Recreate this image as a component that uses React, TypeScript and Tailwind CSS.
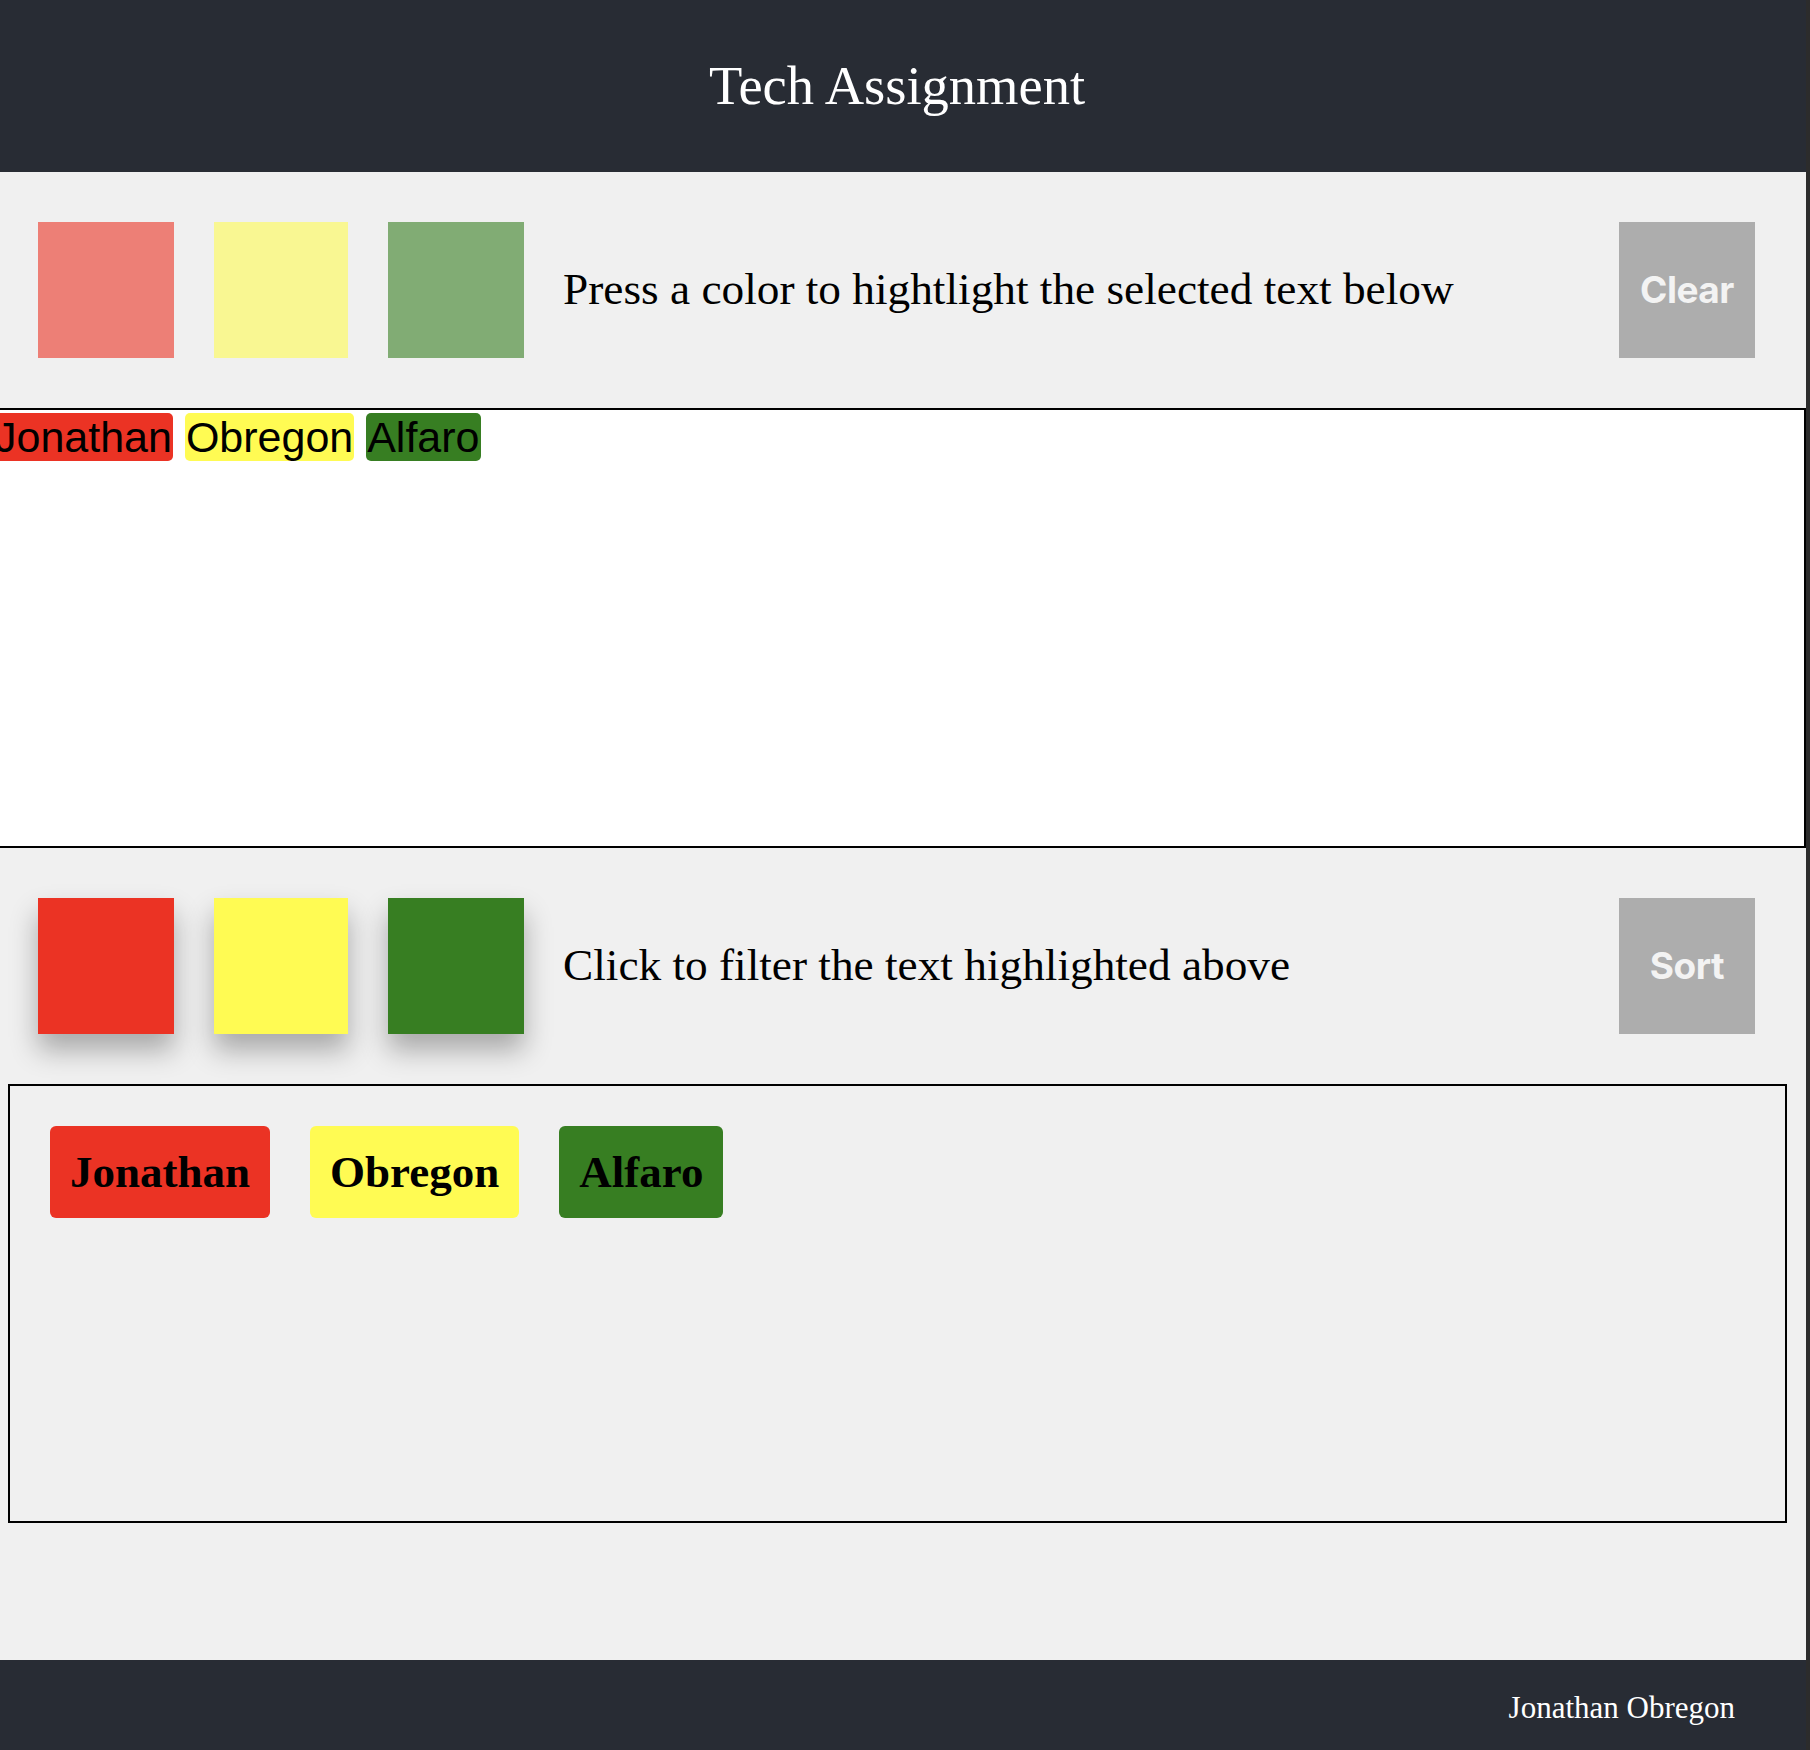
import { useState } from 'react';

const serif = { fontFamily: '"Liberation Serif", "Times New Roman", serif' };

type Color = 'red' | 'yellow' | 'green';

const strong: Record<Color, string> = {
  red: 'bg-[#eb3324]',
  yellow: 'bg-[#fffb53]',
  green: 'bg-[#377e22]',
};

const words: { text: string; color: Color }[] = [
  { text: 'Jonathan', color: 'red' },
  { text: 'Obregon', color: 'yellow' },
  { text: 'Alfaro', color: 'green' },
];

const App: React.FC = () => {
  const [active, setActive] = useState<Color | null>(null);

  return (
    <div className="flex w-[1810px] min-h-[1750px] bg-[#2c2c2c]" style={serif}>
      <div className="flex flex-col w-[1806px] bg-[#f0f0f0] overflow-hidden">
        {/* header */}
        <header className="h-[172px] shrink-0 flex items-center justify-center bg-[#282c34] pr-[12px]">
          <h1 className="text-[54.5px] text-white font-normal leading-none">Tech Assignment</h1>
        </header>

        {/* highlight controls */}
        <div className="h-[236px] shrink-0 flex items-center pl-[38px] pr-[51px]">
          <div className="flex gap-[40px]">
            <button className="w-[136px] h-[136px] bg-[#eb3324] opacity-60" />
            <button className="w-[134px] h-[136px] bg-[#fffb53] opacity-60" />
            <button className="w-[136px] h-[136px] bg-[#377e22] opacity-60" />
          </div>
          <p className="ml-[39px] text-[45.3px] text-black leading-none">
            Press a color to hightlight the selected text below
          </p>
          <button
            className="ml-auto w-[136px] h-[136px] bg-[#adadad] text-[#f3f3f3] text-[37px] font-bold tracking-[-0.5px]"
            style={{ fontFamily: 'Inter, "Liberation Sans", sans-serif' }}
          >
            Clear
          </button>
        </div>

        {/* editable text box */}
        <div
          className="h-[440px] shrink-0 w-[1810px] -ml-[4px] border-2 border-black bg-white pt-[3px] text-[43px] leading-[normal] text-black"
          style={{ fontFamily: '"Liberation Sans", Arial, sans-serif' }}
        >
          <div className="-ml-[4px] whitespace-nowrap">
            {words.map((w, i) => (
              <span key={w.text}>
                <span className={`${strong[w.color]} rounded-[5px] px-[1px]`}>{w.text}</span>
                {i < words.length - 1 ? ' ' : ''}
              </span>
            ))}
          </div>
        </div>

        {/* filter controls */}
        <div className="h-[236px] shrink-0 flex items-center pl-[38px] pr-[51px]">
          <div className="flex gap-[40px]">
            <button
              onClick={() => setActive(active === 'red' ? null : 'red')}
              className="w-[136px] h-[136px] bg-[#eb3324] shadow-[0_16px_26px_rgba(0,0,0,0.3)]"
            />
            <button
              onClick={() => setActive(active === 'yellow' ? null : 'yellow')}
              className="w-[134px] h-[136px] bg-[#fffb53] shadow-[0_16px_26px_rgba(0,0,0,0.3)]"
            />
            <button
              onClick={() => setActive(active === 'green' ? null : 'green')}
              className="w-[136px] h-[136px] bg-[#377e22] shadow-[0_16px_26px_rgba(0,0,0,0.3)]"
            />
          </div>
          <p className="ml-[39px] text-[45.3px] text-black leading-none">
            Click to filter the text highlighted above
          </p>
          <button
            className="ml-auto w-[136px] h-[136px] bg-[#adadad] text-[#f3f3f3] text-[37px] font-bold tracking-[-0.5px]"
            style={{ fontFamily: 'Inter, "Liberation Sans", sans-serif' }}
          >
            Sort
          </button>
        </div>

        {/* filtered results */}
        <div className="ml-[8px] w-[1779px] h-[439px] shrink-0 border-2 border-black p-10">
          <div className="flex gap-10">
            {words
              .filter((w) => !active || w.color === active)
              .map((w) => (
                <div
                  key={w.text}
                  className={`${strong[w.color]} rounded-[6px] px-5 py-5 text-[45px] font-bold leading-[52px] text-black`}
                >
                  {w.text}
                </div>
              ))}
          </div>
        </div>

        <div className="h-[137px] shrink-0" />

        {/* footer */}
        <footer className="h-[90px] shrink-0 flex items-center justify-end pr-[71px] pt-[6px] bg-[#282c34]">
          <span className="text-[31px] text-white">Jonathan Obregon</span>
        </footer>
      </div>
    </div>
  );
};

export default App;
